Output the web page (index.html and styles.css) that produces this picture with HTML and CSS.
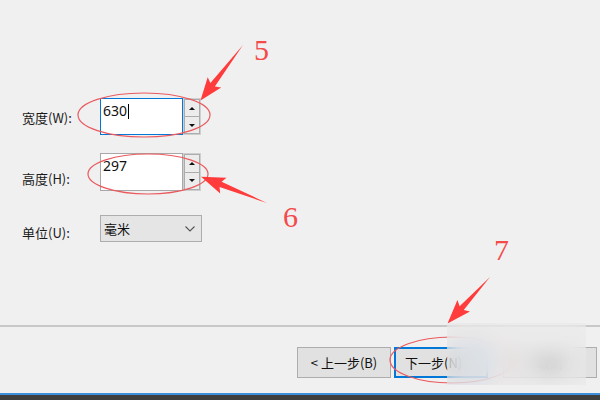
FILE: index.html
```html
<!DOCTYPE html>
<html lang="zh-CN">
<head>
<meta charset="utf-8">
<title>页面设置</title>
<link rel="stylesheet" href="styles.css">
</head>
<body>
<div class="page">
  <main class="form">
    <div class="row row-w">
      <div class="label">宽度(W):</div>
      <div class="spinbox">
        <div class="field field-focus"><span class="value">630</span><span class="caret"></span></div>
        <div class="spin">
          <div class="spin-btn"><span class="tri-up"></span></div>
          <div class="spin-btn"><span class="tri-down"></span></div>
        </div>
      </div>
    </div>
    <div class="row row-h">
      <div class="label">高度(H):</div>
      <div class="spinbox">
        <div class="field"><span class="value">297</span></div>
        <div class="spin">
          <div class="spin-btn"><span class="tri-up"></span></div>
          <div class="spin-btn"><span class="tri-down"></span></div>
        </div>
      </div>
    </div>
    <div class="row row-u">
      <div class="label">单位(U):</div>
      <div class="select">
        <span class="select-text">毫米</span>
        <svg class="chevron" width="10" height="6" viewBox="0 0 10 6"><polyline points="0.5,0.5 5,5 9.5,0.5" fill="none" stroke="#555" stroke-width="1.1"/></svg>
      </div>
    </div>
  </main>
  <footer class="footer">
    <div class="buttons">
      <div class="btn btn-prev">&lt;&nbsp;上一步(B)</div>
      <div class="btn btn-next">下一步(N)</div>
      <div class="btn btn-cancel">取消</div>
    </div>
  </footer>
  <div class="taskbar"></div>

  <svg class="marks" width="600" height="400" viewBox="0 0 600 400">
    <ellipse cx="144" cy="115" rx="66" ry="22" fill="none" stroke="#ea5a5e" stroke-width="1.2"/>
    <ellipse cx="148" cy="174" rx="60" ry="20" fill="none" stroke="#ea5a5e" stroke-width="1.2"/>
    <ellipse cx="452" cy="360" rx="62" ry="23" fill="none" stroke="#ea5a5e" stroke-width="1.2"/>
    <g fill="#ff3b3b">
      <polygon transform="translate(243,45) rotate(127.4)" points="0,0 50,-2.8 47,-8.5 70,0 47,8.5 50,2.8"/>
      <polygon transform="translate(267,203) rotate(-158.2)" points="0,0 50,-2.8 47,-8.5 71,0 47,8.5 50,2.8"/>
      <polygon transform="translate(490,277) rotate(132.4)" points="0,0 42,-2.8 39,-8.5 63,0 39,8.5 42,2.8"/>
    </g>
    <g class="num" fill="#f44a4a">
      <text x="254" y="60">5</text>
      <text x="283" y="227">6</text>
      <text x="494" y="260">7</text>
    </g>
  </svg>
  <div class="blur"></div>
</div>
</body>
</html>
```

FILE: styles.css
```css
html, body {
  margin: 0;
  padding: 0;
  background: #f0f0f0;
}

.page {
  position: relative;
  width: 600px;
  height: 400px;
  overflow: hidden;
  background: #f0f0f0;
  font-family: "Noto Sans", "Noto Sans CJK SC", sans-serif;
  color: #000;
}

.form {
  box-sizing: border-box;
  height: 325px;
  padding: 98px 0 0 22px;
}

.row {
  display: flex;
}

.row-w { height: 37px; margin-bottom: 18px; }
.row-h { height: 38px; margin-bottom: 24px; }
.row-u { height: 27px; }

.label {
  width: 78px;
  font-family: "Noto Sans CJK SC", sans-serif;
  font-size: 13px;
  line-height: 16px;
  color: #1a1a1a;
}

.row-w .label { padding-top: 12px; }
.row-h .label { padding-top: 18px; }
.row-u .label { padding-top: 10px; }

.spinbox {
  display: flex;
  height: 100%;
}

.field {
  box-sizing: border-box;
  width: 83px;
  height: 100%;
  background: #fff;
  border: 1px solid #a8a8a8;
  padding: 4px 0 0 2px;
  font-family: "Noto Sans", sans-serif;
  font-size: 14px;
  line-height: 16px;
  color: #111;
  display: flex;
  align-items: flex-start;
}

.field-focus {
  border-color: #0078d7;
}

.caret {
  display: inline-block;
  width: 1px;
  height: 15px;
  margin-left: 1px;
  margin-top: 1px;
  background: #000;
}

.spin {
  box-sizing: border-box;
  width: 18px;
  height: 100%;
  border: 1px solid #cfcfcf;
  display: flex;
  flex-direction: column;
  background: #f0f0f0;
}

.spin-btn {
  flex: 1;
  box-sizing: border-box;
  border: 1px solid #acacac;
  background: #ececec;
  display: flex;
  align-items: center;
  justify-content: center;
}

.spin-btn + .spin-btn { border-top: none; }

.tri-up {
  width: 0;
  height: 0;
  border-left: 3px solid transparent;
  border-right: 3px solid transparent;
  border-bottom: 3px solid #111;
}

.tri-down {
  width: 0;
  height: 0;
  border-left: 3px solid transparent;
  border-right: 3px solid transparent;
  border-top: 3px solid #111;
}

.select {
  box-sizing: border-box;
  width: 102px;
  height: 100%;
  background: #e5e5e5;
  border: 1px solid #adadad;
  display: flex;
  align-items: center;
  justify-content: space-between;
  padding: 0 6px 0 3px;
}

.select-text {
  font-family: "Noto Sans CJK SC", sans-serif;
  font-size: 13px;
  line-height: 16px;
  color: #111;
}

.footer {
  box-sizing: border-box;
  height: 68px;
  border-top: 2px solid #c8c8c8;
  padding-top: 20px;
}

.buttons {
  display: flex;
  justify-content: flex-end;
  padding-right: 3px;
}

.btn {
  box-sizing: border-box;
  width: 94px;
  height: 31px;
  background: #e1e1e1;
  border: 1px solid #adadad;
  font-family: "Noto Sans CJK SC", sans-serif;
  font-size: 13px;
  line-height: 16px;
  color: #111;
  display: flex;
  align-items: center;
  justify-content: center;
}

.btn-prev { margin-right: 3px; }

.btn-next {
  border: 2px solid #0078d7;
  justify-content: flex-start;
  padding-left: 9px;
  margin-right: 15px;
}

.taskbar {
  box-sizing: border-box;
  height: 7px;
  border-top: 2px solid #3d8fdb;
  background: #3e3e3e;
}

.marks {
  position: absolute;
  left: 0;
  top: 0;
  pointer-events: none;
}

.num text {
  font-family: "Liberation Serif", "DejaVu Serif", serif;
  font-size: 30px;
}

.blur {
  position: absolute;
  left: 447px;
  top: 323px;
  width: 139px;
  height: 62px;
  background: rgba(234, 234, 234, 0.5);
  -webkit-backdrop-filter: blur(10px);
  backdrop-filter: blur(10px);
}
```
